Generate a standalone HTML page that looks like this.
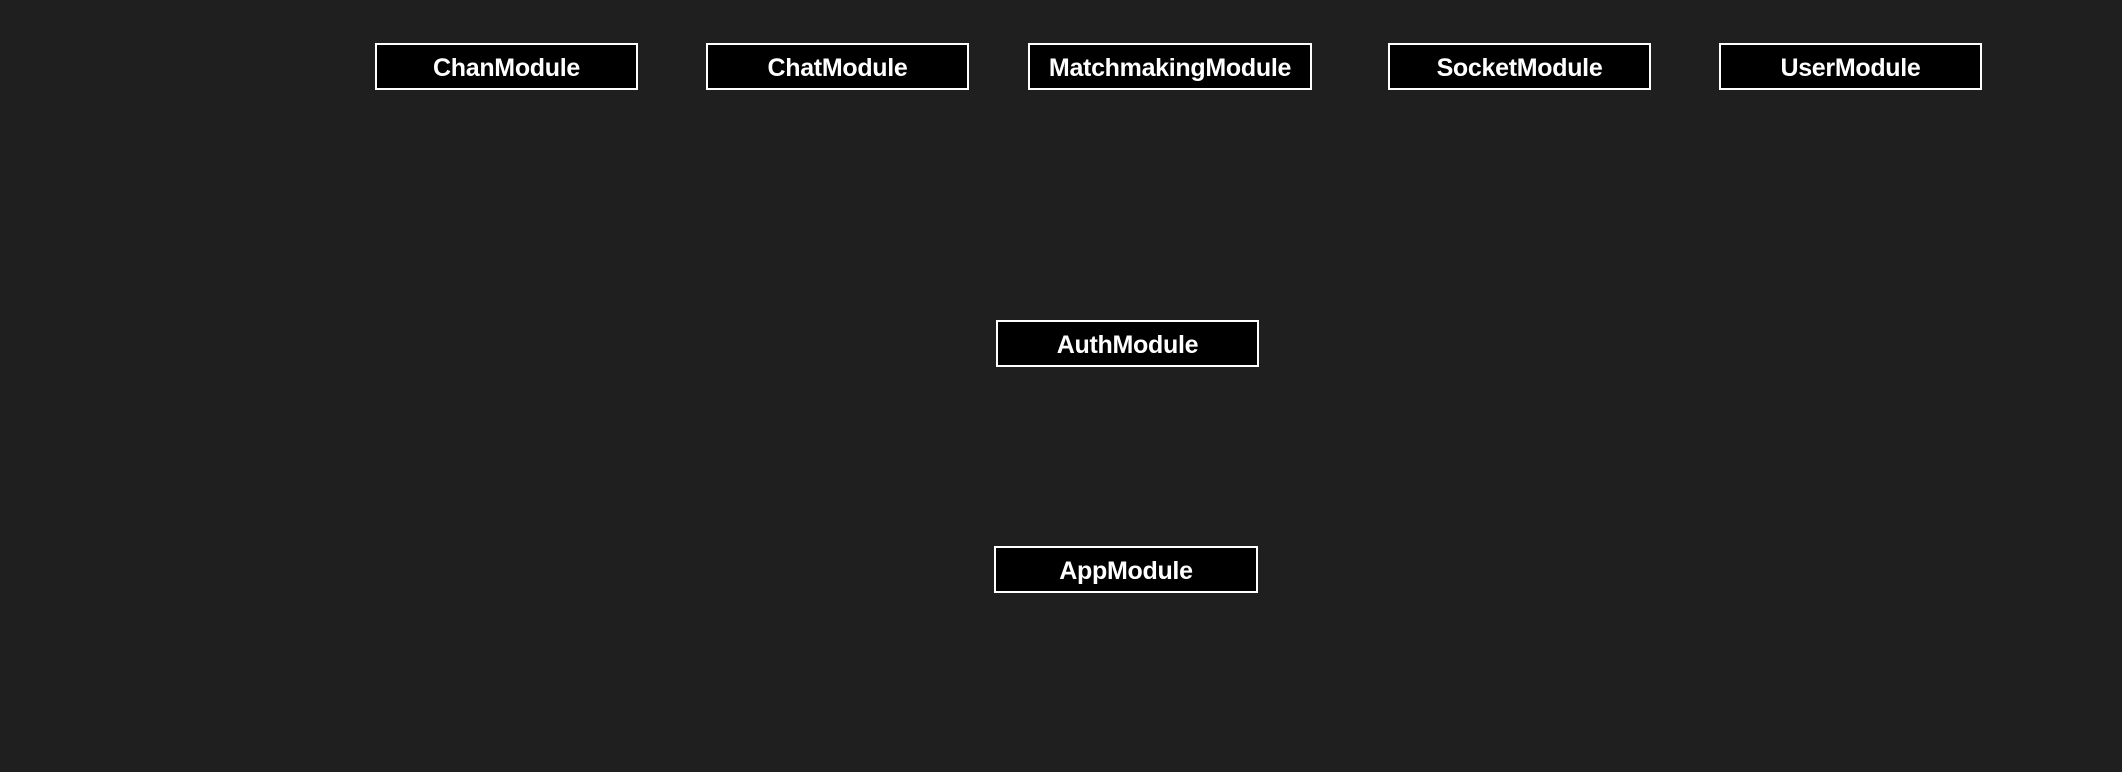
<!DOCTYPE html>
<html><head><style>
body{margin:0;width:2122px;height:772px;background:#1f1f1f;position:relative;overflow:hidden;font-family:"Liberation Sans",sans-serif}
.b{position:absolute;box-sizing:border-box;border:2px solid #fff;background:#000;color:#fff;font-weight:bold;font-size:25px;display:flex;align-items:center;justify-content:center;height:47px;padding-top:4px;letter-spacing:-0.3px}
</style></head><body>
<div class="b" style="left:375px;top:43px;width:263px">ChanModule</div>
<div class="b" style="left:706px;top:43px;width:263px">ChatModule</div>
<div class="b" style="left:1028px;top:43px;width:284px">MatchmakingModule</div>
<div class="b" style="left:1388px;top:43px;width:263px">SocketModule</div>
<div class="b" style="left:1719px;top:43px;width:263px">UserModule</div>
<div class="b" style="left:996px;top:320px;width:263px">AuthModule</div>
<div class="b" style="left:994px;top:546px;width:264px">AppModule</div>
</body></html>
